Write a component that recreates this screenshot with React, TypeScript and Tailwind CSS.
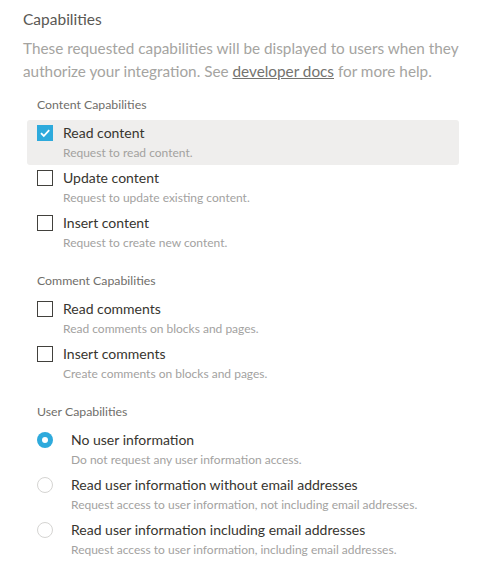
import React from "react";

type Item = { label: string; desc: string; checked?: boolean };

const content: Item[] = [
  { label: "Read content", desc: "Request to read content.", checked: true },
  { label: "Update content", desc: "Request to update existing content." },
  { label: "Insert content", desc: "Request to create new content." },
];

const comments: Item[] = [
  { label: "Read comments", desc: "Read comments on blocks and pages." },
  { label: "Insert comments", desc: "Create comments on blocks and pages." },
];

const users: Item[] = [
  { label: "No user information", desc: "Do not request any user information access.", checked: true },
  { label: "Read user information without email addresses", desc: "Request access to user information, not including email addresses." },
  { label: "Read user information including email addresses", desc: "Request access to user information, including email addresses." },
];

function Checkbox({ checked }: { checked?: boolean }) {
  if (checked) {
    return (
      <div className="w-4 h-4 shrink-0 bg-[#2eaadc] flex items-center justify-center">
        <svg width="12" height="12" viewBox="0 0 12 12" fill="none">
          <path d="M2 6.2 L4.8 9 L10.2 3.2" stroke="white" strokeWidth="1.8" />
        </svg>
      </div>
    );
  }
  return <div className="w-4 h-4 shrink-0 border-[1.5px] border-[#42413d]" />;
}

function Radio({ checked }: { checked?: boolean }) {
  if (checked) {
    return (
      <div className="w-4 h-4 shrink-0 rounded-full bg-[#2eaadc] flex items-center justify-center">
        <div className="w-[6px] h-[6px] rounded-full bg-white" />
      </div>
    );
  }
  return <div className="w-4 h-4 shrink-0 rounded-full border border-[#d5d4d2]" />;
}

function Row({ item, radio }: { item: Item; radio?: boolean }) {
  const active = !radio && item.checked;
  return (
    <div className={`flex pl-[10px] pt-[3px] pb-[4px] rounded-[3px] ${active ? "bg-[#efeeed]" : ""}`}>
      <div className="h-5 flex items-center">
        {radio ? <Radio checked={item.checked} /> : <Checkbox checked={item.checked} />}
      </div>
      <div className={radio ? "ml-[18px]" : "ml-[10px]"}>
        <div className="text-[14px] leading-[20px] text-[#37352f]">{item.label}</div>
        <div className="text-[12px] leading-[16px] mt-[2px] text-[#a3a29f]">{item.desc}</div>
      </div>
    </div>
  );
}

function Section({ title, items, radio }: { title: string; items: Item[]; radio?: boolean }) {
  return (
    <div className="flex flex-col">
      <div className="pl-[10px] text-[12.3px] leading-[16px] text-[#6f6e6a] mb-[7px]">{title}</div>
      {items.map((it) => (
        <Row key={it.label} item={it} radio={radio} />
      ))}
    </div>
  );
}

export default function App() {
  return (
    <div className="w-[488px] h-[568px] bg-white pl-[23px] pt-[7px]" style={{ fontFamily: 'Lato, "Open Sans", sans-serif' }}>
      <div className="text-[15.5px] leading-[24px] text-[#5a5854]">Capabilities</div>
      <div className="mt-[6px] w-[440px] text-[15.3px] leading-[23px] text-[#a5a4a1]">
        These requested capabilities will be displayed to users when they authorize your integration. See{" "}
        <span className="underline text-[#74736f]">developer docs</span> for more help.
      </div>
      <div className="ml-[4px] w-[432px] mt-[14px] flex flex-col gap-[18px]">
        <Section title="Content Capabilities" items={content} />
        <Section title="Comment Capabilities" items={comments} />
        <Section title="User Capabilities" items={users} radio />
      </div>
    </div>
  );
}
